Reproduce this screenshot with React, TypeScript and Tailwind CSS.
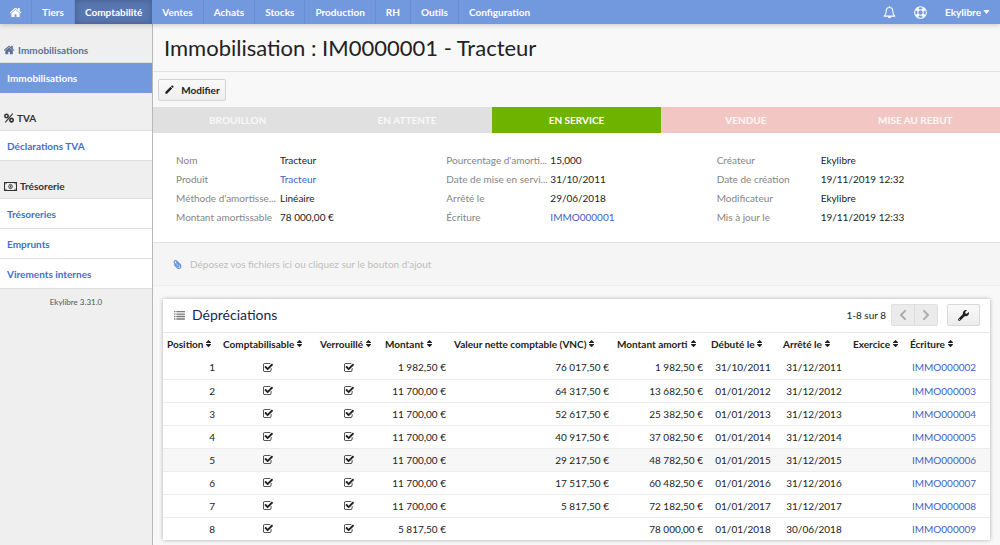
import React from "react";
import { FaPaperclip, FaWrench, FaChevronLeft, FaChevronRight, FaSort } from "react-icons/fa";
import { MdEdit } from "react-icons/md";

type IconProps = { className?: string };

const HomeIcon = ({ className }: IconProps) => (
  <svg viewBox="64 128 1664 1536" fill="currentColor" className={className} aria-hidden="true">
    <path d="M1408 992v480q0 26-19 45t-45 19h-384v-384h-256v384h-384q-26 0-45-19t-19-45v-480q0-1 .5-3t.5-3l575-474 575 474q1 2 1 6zm223-69l-62 74q-8 9-21 11h-3q-13 0-21-7l-692-577-692 577q-12 8-24 7-13-2-21-11l-62-74q-8-10-7-23.5t11-21.5l719-599q32-26 76-26t76 26l244 204v-195q0-14 9-23t23-9h192q14 0 23 9t9 23v408l219 182q10 8 11 21.5t-7 23.5z" />
  </svg>
);

const CheckIcon = ({ className }: IconProps) => (
  <svg viewBox="64 96 1664 1472" fill="currentColor" className={className} role="img" aria-label="Oui">
    <path d="M1472 930v318q0 119-84.5 203.5t-203.5 84.5h-832q-119 0-203.5-84.5t-84.5-203.5v-832q0-119 84.5-203.5t203.5-84.5h832q63 0 117 25 15 7 18 23 3 17-9 29l-49 49q-10 10-23 10-3 0-9-2-23-6-45-6h-832q-66 0-113 47t-47 113v832q0 66 47 113t113 47h832q66 0 113-47t47-113v-254q0-13 9-22l64-64q10-10 23-10 6 0 12 3 20 8 20 29zm231-489l-814 814q-24 24-57 24t-57-24l-430-430q-24-24-24-57t24-57l110-110q24-24 57-24t57 24l263 263 647-647q24-24 57-24t57 24l110 110q24 24 24 57t-24 57z" />
  </svg>
);

const BellIcon = ({ className }: IconProps) => (
  <svg viewBox="0 0 14 14" fill="none" stroke="currentColor" className={className} aria-hidden="true">
    <path d="M7 1.6c-2.3 0-3.5 1.7-3.5 3.7 0 3-.8 4.4-2.300 5.600h11.600c-1.500-1.200-2.300-2.600-2.300-5.600 0-2-1.200-3.700-3.500-3.700z" strokeWidth="1.150" strokeLinejoin="round" />
    <path d="M7 .6v1" strokeWidth="1.200" strokeLinecap="round" />
    <path d="M5.200 11.400a1.800 1.900 0 0 0 3.600 0z" fill="currentColor" stroke="none" />
  </svg>
);

const LifeRingIcon = ({ className }: IconProps) => (
  <svg viewBox="0 0 14 14" fill="none" stroke="currentColor" className={className} aria-hidden="true">
    <circle cx="7" cy="7" r="6.300" strokeWidth="1.100" />
    <circle cx="7" cy="7" r="2.900" strokeWidth="1.100" />
    <circle cx="7" cy="7" r="4.600" strokeWidth="3.200" pathLength="8" strokeDasharray="0.900 1.100" strokeDashoffset="-0.550" />
  </svg>
);

const PercentIcon = ({ className }: IconProps) => (
  <svg viewBox="0 0 12 11" fill="none" stroke="currentColor" className={className} aria-hidden="true">
    <ellipse cx="3" cy="3" rx="2" ry="2.100" strokeWidth="1.900" />
    <ellipse cx="9" cy="8" rx="2" ry="2.100" strokeWidth="1.900" />
    <path d="M10.200 0.600L1.800 10.400" strokeWidth="1.300" strokeLinecap="round" />
  </svg>
);

const MoneyIcon = ({ className }: IconProps) => (
  <svg viewBox="0 0 13 9" fill="none" stroke="currentColor" className={className} aria-hidden="true">
    <rect x="0.500" y="0.500" width="12" height="8" />
    <path d="M1 2.500L2.500 1M10.500 1L12 2.500M1 6.500L2.500 8M10.500 8L12 6.500" strokeWidth="0.900" />
    <ellipse cx="6.500" cy="4.500" rx="1.700" ry="2.200" strokeWidth="0.900" />
    <path d="M6.500 3.400v2.200" strokeWidth="0.900" />
  </svg>
);

const ListIcon = ({ className }: IconProps) => (
  <svg viewBox="0 0 12 10" fill="currentColor" className={className} aria-hidden="true">
    <path d="M0 0h1.500v1.500H0zM2.500 0H12v1.500H2.500zM0 2.700h1.500v1.500H0zM2.500 2.700H12v1.500H2.500zM0 5.400h1.500v1.500H0zM2.500 5.400H12v1.500H2.500zM0 8.100h1.500v1.500H0zM2.500 8.100H12v1.500H2.500z" />
  </svg>
);

const navItems = ["Tiers", "Comptabilité", "Ventes", "Achats", "Stocks", "Production", "RH", "Outils", "Configuration"];

const stateItems = [
  { name: "BROUILLON", style: "bg-[#e0e0e0] text-[#f8f8f8]" },
  { name: "EN ATTENTE", style: "bg-[#e0e0e0] text-[#f8f8f8]" },
  { name: "EN SERVICE", style: "bg-[#6db300] text-white" },
  { name: "VENDUE", style: "bg-[#f1c6c3] text-[#fdf8f8]" },
  { name: "MISE AU REBUT", style: "bg-[#f1c6c3] text-[#fdf8f8]" },
];

type Detail = { label: string; value: string; link?: boolean };

const details: Detail[][] = [
  [
    { label: "Nom", value: "Tracteur" },
    { label: "Produit", value: "Tracteur", link: true },
    { label: "Méthode d'amortisse...", value: "Linéaire" },
    { label: "Montant amortissable", value: "78 000,00 €" },
  ],
  [
    { label: "Pourcentage d'amorti...", value: "15,000" },
    { label: "Date de mise en servi...", value: "31/10/2011" },
    { label: "Arrêté le", value: "29/06/2018" },
    { label: "Écriture", value: "IMMO000001", link: true },
  ],
  [
    { label: "Créateur", value: "Ekylibre" },
    { label: "Date de création", value: "19/11/2019 12:32" },
    { label: "Modificateur", value: "Ekylibre" },
    { label: "Mis à jour le", value: "19/11/2019 12:33" },
  ],
];

const columns = [
  { name: "Position", width: "w-[56px]" },
  { name: "Comptabilisable", width: "w-[97px]" },
  { name: "Verrouillé", width: "w-[65px]" },
  { name: "Montant", width: "w-[69px]" },
  { name: "Valeur nette comptable (VNC)", width: "w-[163px]" },
  { name: "Montant amorti", width: "w-[94px]" },
  { name: "Débuté le", width: "w-[72px]" },
  { name: "Arrêté le", width: "w-[70px]" },
  { name: "Exercice", width: "w-[57px]" },
  { name: "Écriture", width: "w-[84px]" },
];

const rows = [
  ["1 982,50 €", "76 017,50 €", "1 982,50 €", "31/10/2011", "31/12/2011", "IMMO000002"],
  ["11 700,00 €", "64 317,50 €", "13 682,50 €", "01/01/2012", "31/12/2012", "IMMO000003"],
  ["11 700,00 €", "52 617,50 €", "25 382,50 €", "01/01/2013", "31/12/2013", "IMMO000004"],
  ["11 700,00 €", "40 917,50 €", "37 082,50 €", "01/01/2014", "31/12/2014", "IMMO000005"],
  ["11 700,00 €", "29 217,50 €", "48 782,50 €", "01/01/2015", "31/12/2015", "IMMO000006"],
  ["11 700,00 €", "17 517,50 €", "60 482,50 €", "01/01/2016", "31/12/2016", "IMMO000007"],
  ["11 700,00 €", "5 817,50 €", "72 182,50 €", "01/01/2017", "31/12/2017", "IMMO000008"],
  ["5 817,50 €", "", "78 000,00 €", "01/01/2018", "30/06/2018", "IMMO000009"],
];

function TopNav() {
  return (
    <nav className="relative z-10 flex h-6 bg-[#7298de] font-bold text-white shadow-[0_1px_5px_rgba(0,0,0,0.2)]">
      <a href="#accueil" aria-label="Accueil" className="flex w-8 items-center justify-center border-r border-[#6a8ed0]">
        <HomeIcon className="h-[11px] w-3" />
      </a>
      {navItems.map((item) => (
        <a
          key={item}
          href={`#${item}`}
          className={`flex items-center px-[10px] ${
            item === "Comptabilité"
              ? "bg-[#5877b2] shadow-[inset_0_0_6px_rgba(0,0,0,0.25)]"
              : item === "Configuration"
                ? ""
                : "border-r border-[#6a8ed0]"
          }`}
        >
          {item}
        </a>
      ))}
      <div className="ml-auto flex items-center pr-[10px]">
        <button type="button" aria-label="Notifications" className="mr-[18px]">
          <BellIcon className="size-[13px]" />
        </button>
        <button type="button" aria-label="Aide" className="mr-[18px]">
          <LifeRingIcon className="size-[13px]" />
        </button>
        <button type="button" className="flex items-center gap-[2px]">
          Ekylibre
          <svg viewBox="0 0 8 5" className="h-1 w-[7px]" fill="currentColor" aria-hidden="true">
            <path d="M0 0h8L4 5z" />
          </svg>
        </button>
      </div>
    </nav>
  );
}

type SideGroupProps = { icon: React.ReactNode; title: string; links: string[]; active?: boolean };

function SideGroup({ icon, title, links, active }: SideGroupProps) {
  return (
    <section>
      <h2
        className={`flex items-end gap-[3px] border-b border-[#dedede] pb-[3px] pl-1 font-bold leading-[18px] ${
          active ? "h-[39px] text-[#5b6f9a]" : "h-[38px] text-[#333]"
        }`}
      >
        <span className="flex h-[18px] items-center">{icon}</span>
        {title}
      </h2>
      <ul>
        {links.map((link) => (
          <li key={link}>
            <a
              href={`#${link}`}
              className={`flex h-[30px] items-center border-b pl-[7px] font-bold ${
                active ? "border-[#7298de] bg-[#7298de] text-white" : "border-[#dedede] bg-white text-[#3f6fd1]"
              }`}
            >
              {link}
            </a>
          </li>
        ))}
      </ul>
    </section>
  );
}

function Sidebar() {
  return (
    <aside className="w-[153px] shrink-0 border-r border-[#b8b8b8] bg-[#efefef]">
      <SideGroup active icon={<HomeIcon className="h-[10px] w-[11px]" />} title="Immobilisations" links={["Immobilisations"]} />
      <SideGroup icon={<PercentIcon className="h-[10px] w-[10px]" />} title="TVA" links={["Déclarations TVA"]} />
      <SideGroup
        icon={<MoneyIcon className="h-[9px] w-[13px]" />}
        title="Trésorerie"
        links={["Trésoreries", "Emprunts", "Virements internes"]}
      />
      <p className="pt-[5px] text-center text-[8px] leading-4 text-[#555]">Ekylibre 3.31.0</p>
    </aside>
  );
}

function DepreciationCard() {
  return (
    <section className="mx-[10px] mt-[13px] bg-white shadow-[0_0_4px_rgba(0,0,0,0.3)]">
      <header className="flex h-[34px] items-center border-b border-[#e6e6e6] pb-px pl-[11px] pr-[10px]">
        <ListIcon className="h-[9px] w-[11px] text-[#777]" />
        <h2 className="ml-[7px] text-[14px] text-[#14285a]">Dépréciations</h2>
        <span className="ml-auto mr-[5px]">1-8 sur 8</span>
        <div className="flex h-[22px] rounded-[2px] border border-[#e0e0e0] bg-[#ebebeb] text-[#aaa]">
          <button type="button" aria-label="Page précédente" className="flex w-[23px] items-center justify-center border-r border-[#dcdcdc]">
            <FaChevronLeft className="size-3" />
          </button>
          <button type="button" aria-label="Page suivante" className="flex w-[22px] items-center justify-center">
            <FaChevronRight className="size-3" />
          </button>
        </div>
        <button
          type="button"
          aria-label="Options"
          className="ml-[9px] flex h-[22px] w-[33px] items-center justify-center rounded-[2px] border border-[#d8d8d8] bg-linear-to-b from-[#fafafa] to-[#ececec]"
        >
          <FaWrench className="size-[11px]" />
        </button>
      </header>
      <table className="w-full table-fixed border-collapse">
        <thead>
          <tr className="h-[23px]">
            {columns.map((column) => (
              <th key={column.name} scope="col" className={`${column.width} p-0 pb-[2px] pl-1 text-left font-bold whitespace-nowrap`}>
                <button type="button" className="flex items-center gap-px">
                  {column.name}
                  <FaSort className="size-[9px]" />
                </button>
              </th>
            ))}
          </tr>
        </thead>
        <tbody>
          {rows.map(([amount, net, depreciated, start, stop, entry], index) => (
            <tr
              key={entry}
              className={`h-[23px] border-b border-[#ececec] last:border-b-0 ${index === 4 ? "bg-[#f7f7f7]" : ""}`}
            >
              <td className="p-0 pr-1 text-right">{index + 1}</td>
              <td className="p-0">
                <CheckIcon className="mx-auto h-[9px] w-[10px]" />
              </td>
              <td className="p-0">
                <CheckIcon className="mx-auto h-[9px] w-[10px]" />
              </td>
              <td className="p-0 pr-1 text-right">{amount}</td>
              <td className="p-0 pr-1 text-right">{net}</td>
              <td className="p-0 pr-1 text-right">{depreciated}</td>
              <td className="p-0 text-center">{start}</td>
              <td className="p-0 text-center">{stop}</td>
              <td className="p-0" />
              <td className="p-0 pr-2 text-center">
                <a href={`#${entry}`} className="text-[#3f5fc8]">
                  {entry}
                </a>
              </td>
            </tr>
          ))}
        </tbody>
      </table>
    </section>
  );
}

export default function App() {
  return (
    <div className="flex min-h-screen flex-col bg-[#f8f8f8] font-['Lato',sans-serif] text-[10px] leading-4 text-[#222]">
      <TopNav />
      <div className="flex flex-1">
        <Sidebar />
        <main className="min-w-0 flex-1">
          <h1 className="flex h-12 items-center border-b border-[#e2e2e2] pl-[11px] text-[22px] leading-7">
            Immobilisation : IM0000001 - Tracteur
          </h1>
          <div className="flex h-[35px] items-center pl-[5px]">
            <button
              type="button"
              className="flex h-[22px] w-[68px] items-center justify-center gap-[6px] rounded-[2px] border border-[#d4d4d4] bg-linear-to-b from-[#fafafa] to-[#eeeeee] font-bold"
            >
              <MdEdit className="size-[11px]" />
              Modifier
            </button>
          </div>
          <ol className="grid h-[26px] grid-cols-5 font-bold">
            {stateItems.map((state) => (
              <li key={state.name} className={`flex items-center justify-center ${state.style}`}>
                {state.name}
              </li>
            ))}
          </ol>
          <div className="grid grid-cols-3 border-b border-[#e2e2e2] bg-white px-[18px] pt-[17px] pb-4">
            {details.map((group) => (
              <dl key={group[0].label} className="px-[5px]">
                {group.map(({ label, value, link }) => (
                  <div key={label} className="flex h-[19px] items-center">
                    <dt className="w-[104px] shrink-0 whitespace-nowrap text-[#858585]">{label}</dt>
                    <dd>
                      {link ? (
                        <a href={`#${value}`} className="text-[#3f5fc8]">
                          {value}
                        </a>
                      ) : (
                        value
                      )}
                    </dd>
                  </div>
                ))}
              </dl>
            ))}
          </div>
          <div className="flex h-[43px] items-center gap-2 border-b border-[#eeeeee] bg-[#f5f5f5] pl-5 text-[#bdbdbd]">
            <FaPaperclip className="size-[9px] -scale-x-100 text-[#5b8be0]" />
            Déposez vos fichiers ici ou cliquez sur le bouton d'ajout
          </div>
          <DepreciationCard />
        </main>
      </div>
    </div>
  );
}
